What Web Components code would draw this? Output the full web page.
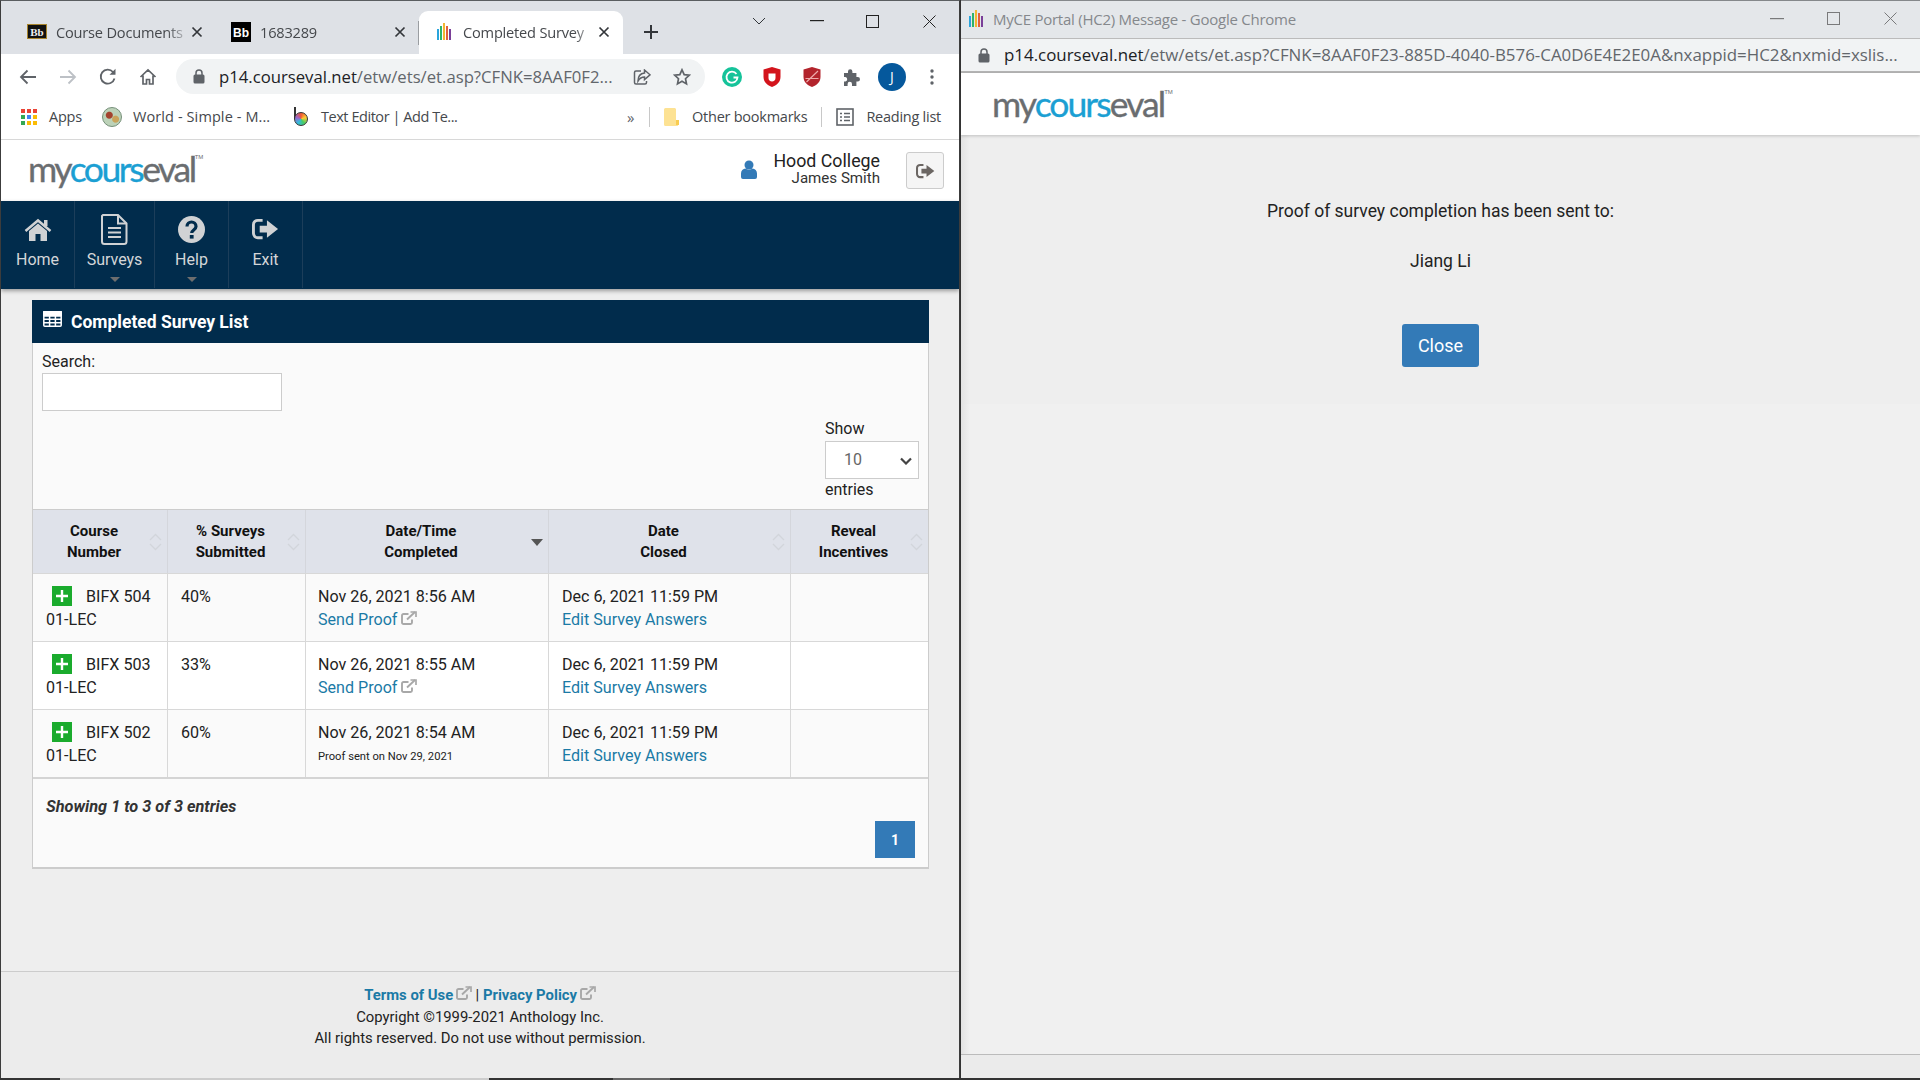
<!DOCTYPE html>
<html lang="en">
<head>
<meta charset="utf-8">
<title>Completed Survey List</title>
<style>
    html, body { margin: 0; padding: 0; background: #3a3a3a; }
    body { width: 1920px; height: 1080px; overflow: hidden; font-family: Roboto, "Liberation Sans", sans-serif; }
    #desk { display: grid; grid-template-columns: 960px 960px; grid-template-rows: 1078px 2px; }
    #taskbar { grid-column: 1 / 3; background: linear-gradient(90deg, #333 60px, #ccc 60px, #ccc 489px, #333 489px, #333 613px, #666 613px, #666 670px, #333 670px); }
</style>
</head>
<body>
<div id="desk">
    <browser-window>
        <course-header slot="page" user="1"></course-header>
        <main-nav slot="page"></main-nav>
        <survey-panel slot="page">
            <survey-row course="BIFX 504" pct="40%" done="Nov 26, 2021 8:56 AM" tint></survey-row>
            <survey-row course="BIFX 503" pct="33%" done="Nov 26, 2021 8:55 AM"></survey-row>
            <survey-row course="BIFX 502" pct="60%" done="Nov 26, 2021 8:54 AM" sent="Proof sent on Nov 29, 2021" tint></survey-row>
        </survey-panel>
        <page-footer slot="page"></page-footer>
    </browser-window>
    <popup-window></popup-window>
    <div id="taskbar"></div>
</div>

<script>
// Shared inline icons
const ICONS = {
    bars: `<svg width="15" height="17" viewBox="0 0 15 17"><rect x="0" y="6" width="2" height="11" fill="#2aa4dc"/><rect x="3" y="3" width="2" height="14" fill="#2fb36a"/><rect x="6" y="0" width="2" height="17" fill="#f2b632"/><rect x="9" y="3" width="2" height="14" fill="#e2603a"/><rect x="12" y="6" width="2" height="11" fill="#7a3f98"/></svg>`,
    external: `<svg class="ext" width="16" height="14" viewBox="0 0 16 14" fill="none" stroke="#a8a8a8" stroke-width="1.900"><path d="M11 8.500v3a1.500 1.500 0 0 1-1.500 1.500H2.500A1.500 1.500 0 0 1 1 11.500V4.500A1.500 1.500 0 0 1 2.500 3H7.500"/><path d="M6 8.500 14 1"/><path d="M9.500 1H15v5" stroke-width="1.700"/></svg>`,
    signout: `<path d="M11 2H6a4.500 4.500 0 0 0-4.500 4.500v9A4.500 4.500 0 0 0 6 20h5" fill="none" stroke="currentColor" stroke-width="3"/><path d="M8 7.500h7.500V2L27 11 15.500 20v-5.500H8z" fill="currentColor"/>`,
    lock: `<svg width="12" height="15" viewBox="0 0 12 15"><path d="M3 6V4a3 3 0 0 1 6 0v2" fill="none" stroke="#5f6368" stroke-width="1.500"/><rect x="0.500" y="5.500" width="11" height="9" rx="1.500" fill="#5f6368"/></svg>`
};

// Wordmark used in both windows
class CourseLogo extends HTMLElement {
    constructor() {
        super();
        this.attachShadow({ mode: 'open' });
        this.shadowRoot.innerHTML = `
            <style>
                :host { display: inline-flex; font: 400 35.5px/40px Lato, "Open Sans", sans-serif; letter-spacing: var(--logo-spacing, -1.95px); color: #6a6d70; -webkit-text-stroke: .35px currentColor; }
                b { font-weight: 400; color: #1b9fd3; }
                sup { font: 400 6px/6px "Liberation Sans", sans-serif; letter-spacing: 0; margin-top: 5px; -webkit-text-stroke: 0; }
            </style>
            <span>my<b>cours</b>eval</span><sup>TM</sup>`;
    }
}
customElements.define('course-logo', CourseLogo);

// Single browser tab
class ChromeTab extends HTMLElement {
    constructor() {
        super();
        this.attachShadow({ mode: 'open' });
        this.shadowRoot.innerHTML = `
            <style>
                :host { display: flex; align-items: center; height: 43px; box-sizing: border-box; width: 204px; padding: 0 13px 2px 15px; position: relative; }
                :host([active]) { background: #fff; border-radius: 9px 9px 0 0; }
                :host([divider])::after { content: ''; position: absolute; right: 0; top: 10px; height: 24px; width: 1px; background: #9a9da1; }
                .icon { width: 20px; height: 20px; display: flex; align-items: center; justify-content: center; flex: none; }
                .title { flex: 1; margin-left: 9px; font: 400 14.600px/20px "Open Sans", sans-serif; letter-spacing: -.2px; color: #45484c; white-space: nowrap; overflow: hidden;
                         -webkit-mask-image: linear-gradient(90deg, #000 82%, transparent); mask-image: linear-gradient(90deg, #000 82%, transparent); }
                svg.x { flex: none; }
            </style>
            <span class="icon"><slot name="icon"></slot></span>
            <span class="title"><slot></slot></span>
            <svg class="x" width="12" height="12" viewBox="0 0 12 12"><path d="M1.500 1.500l9 9m0-9-9 9" stroke="#33363a" stroke-width="1.700" fill="none"/></svg>`;
    }
}
customElements.define('chrome-tab', ChromeTab);

// Left browser window: tabs, toolbar, bookmarks, then the page slot
class BrowserWindow extends HTMLElement {
    constructor() {
        super();
        this.attachShadow({ mode: 'open' });
        this.shadowRoot.innerHTML = `
            <style>
                :host { display: flex; flex-direction: column; height: 1078px; box-sizing: border-box; border-top: 1px solid #5a5d60; border-left: 1px solid #3c3c3c; border-right: 1px solid #3c3c3c; background: #eee; overflow: hidden; }
                .tabs { height: 53px; background: #dee1e6; display: flex; align-items: flex-end; padding-left: 11px; flex: none; box-sizing: border-box; }
                .new { margin: 0 0 10px 16px; width: 24px; height: 24px; }
                .winbtns { margin-left: auto; display: flex; align-self: flex-start; align-items: center; height: 40px; }
                .winbtns svg { display: block; }
                .toolbar { height: 45px; background: #fff; display: flex; align-items: center; padding-left: 7px; flex: none; box-sizing: border-box; }
                .btn { width: 40px; height: 40px; display: flex; align-items: center; justify-content: center; flex: none; }
                .omni { margin-left: 8px; width: 529px; height: 35px; border-radius: 18px; background: #f1f3f4; display: flex; align-items: center; padding-left: 17px; box-sizing: border-box; margin-right: 7px; flex: none; }
                .url { margin-left: 14px; font: 400 16.700px/22px "Open Sans", sans-serif; color: #62666b; white-space: nowrap; width: 400px; overflow: hidden; }
                .url b { font-weight: 400; color: #202124; }
                .omni .btn { width: 40px; }
                .omni .share { margin-left: 3px; }
                .avatar { width: 28px; height: 28px; border-radius: 50%; background: #05589c; color: #fff; font: 400 14px/28px "Open Sans", sans-serif; text-align: center; }
                .marks { height: 36px; padding: 0 18px 4px 20px; background: #fff; border-bottom: 1px solid #d8d8d8; display: flex; align-items: center; flex: none; font: 400 14.500px/20px "Open Sans", sans-serif; letter-spacing: -.25px; color: #45484c; white-space: nowrap; }
                .mark { display: flex; align-items: center; flex: none; }
                .sep { width: 1px; height: 20px; background: #c8c8c8; flex: none; }
                .page { flex: 1; display: flex; flex-direction: column; min-height: 0; }
                .bo { position: relative; width: 16px; height: 20px; display: block; }
                .bo i { position: absolute; left: 1px; bottom: 1px; width: 14px; height: 14px; border-radius: 50%; box-sizing: border-box; border: 1.500px solid #333; background: conic-gradient(#e53, #fc3, #4c6, #3bd, #96c, #e53); }
                .bo u { position: absolute; left: 1px; top: 0; width: 1.500px; height: 12px; background: #333; }
                .globe { width: 20px; height: 20px; border-radius: 50%; background: radial-gradient(circle at 35% 40%, #a3432e 0 3px, transparent 4px), radial-gradient(circle at 70% 62%, #c9a35a 0 3px, transparent 4px), #bcd2b8; border: 1px solid #76907a; box-sizing: border-box; display: block; }
            </style>
            <div class="tabs">
                <chrome-tab>
                    <svg slot="icon" width="20" height="15" viewBox="0 0 20 15"><rect x=".5" y=".5" width="19" height="14" fill="#111" stroke="#a8842c"/><text x="10" y="11.500" text-anchor="middle" font-family="Liberation Serif" font-weight="700" font-size="11" fill="#eee">Bb</text></svg>
                    Course Documents
                </chrome-tab>
                <chrome-tab divider style="width:203px">
                    <svg slot="icon" width="20" height="20" viewBox="0 0 20 20"><rect width="20" height="20" fill="#000"/><text x="10" y="14.500" text-anchor="middle" font-family="Liberation Sans" font-weight="700" font-size="12" fill="#fff">Bb</text></svg>
                    1683289
                </chrome-tab>
                <chrome-tab active>
                    <span slot="icon" style="display:block;height:17px">${ICONS.bars}</span>
                    Completed Survey
                </chrome-tab>
                <svg class="new" viewBox="0 0 24 24"><path d="M12 5v14M5 12h14" stroke="#33363a" stroke-width="2"/></svg>
                <div class="winbtns">
                    <svg width="14" height="8" viewBox="0 0 14 8" style="margin-right:44px"><path d="M1 1l6 6 6-6" fill="none" stroke="#33363a"/></svg>
                    <svg width="14" height="2" viewBox="0 0 14 2" style="margin-right:42px"><rect width="14" height="1.200" fill="#222"/></svg>
                    <svg width="13" height="13" viewBox="0 0 13 13" style="margin-right:44px"><rect x=".5" y=".5" width="12" height="12" fill="none" stroke="#222"/></svg>
                    <svg width="13" height="13" viewBox="0 0 13 13" style="margin-right:23px"><path d="M.5.5l12 12m0-12-12 12" stroke="#222" fill="none"/></svg>
                </div>
            </div>
            <div class="toolbar">
                <span class="btn"><svg width="18" height="16" viewBox="0 0 18 16" fill="none" stroke="#5f6368" stroke-width="1.800"><path d="M17 8H2M8.500 1.500 2 8l6.500 6.500"/></svg></span>
                <span class="btn"><svg width="18" height="16" viewBox="0 0 18 16" fill="none" stroke="#bdc1c6" stroke-width="1.800"><path d="M1 8h15M9.500 1.500 16 8l-6.500 6.500"/></svg></span>
                <span class="btn"><svg width="18" height="18" viewBox="0 0 18 18" fill="none" stroke="#5f6368" stroke-width="1.800"><path d="M15.500 10.500A7 7 0 1 1 14 4"/><path d="M16.500 .8v6h-6z" fill="#5f6368" stroke="none"/></svg></span>
                <span class="btn"><svg width="18" height="18" viewBox="0 0 18 18" fill="none" stroke="#5f6368" stroke-width="1.700"><path d="M1.500 9 9 2l7.500 7M4 7.500V16h3.500v-4.500h3V16H14V7.500"/></svg></span>
                <div class="omni">
                    ${ICONS.lock}
                    <span class="url"><b>p14.courseval.net</b>/etw/ets/et.asp?CFNK=8AAF0F2...</span>
                    <span class="btn share"><svg width="18" height="16" viewBox="0 0 18 16" fill="none" stroke="#5f6368" stroke-width="1.500"><path d="M8 2H3a1.500 1.500 0 0 0-1.500 1.500v10A1.500 1.500 0 0 0 3 15h9a1.500 1.500 0 0 0 1.500-1.500V12"/><path d="M11.500 1 17 5.800l-5.500 4.700V8C8 8 6.500 9.500 5 12c0-4 2-7.500 6.500-8z"/></svg></span>
                    <span class="btn"><svg width="18" height="18" viewBox="0 0 18 18" fill="none" stroke="#5f6368" stroke-width="1.700"><path d="M9 1.800l2.200 4.800 5.100.6-3.800 3.500 1 5.200L9 13.300l-4.500 2.600 1-5.200-3.800-3.500 5.100-.6z"/></svg></span>
                </div>
                <span class="btn"><svg width="20" height="20" viewBox="0 0 20 20"><circle cx="10" cy="10" r="10" fill="#15c39a"/><path d="M14.500 7A5.500 5.500 0 1 0 15.500 10.500H11.500" fill="none" stroke="#fff" stroke-width="1.800"/></svg></span>
                <span class="btn"><svg width="18" height="20" viewBox="0 0 18 20"><path d="M9 0l8.500 2.500V10c0 5-4 8.500-8.500 10C4.500 18.500.5 15 .5 10V2.500z" fill="#d3141c"/><path d="M5.500 6.500h7V11c0 2-1.500 3.500-3.500 3.500S5.500 13 5.500 11z" fill="#fff"/></svg></span>
                <span class="btn"><svg width="18" height="20" viewBox="0 0 18 20"><path d="M9 0l8.500 2.500V10c0 5-4 8.500-8.500 10C4.500 18.500.5 15 .5 10V2.500z" fill="#b3242c"/><path d="M2.500 11.500h13M3.500 15 15 4" stroke="#eaa" stroke-width="1.200"/></svg></span>
                <span class="btn"><svg width="18" height="18" viewBox="0 0 18 18"><path d="M1 5h4V3.500a2.200 2.200 0 0 1 4.400 0V5h4v4h1.400a2.200 2.200 0 0 1 0 4.400H13.400V18H9v-2a2.200 2.200 0 0 0-4.400 0v2H1v-4.500h1.400a2.300 2.300 0 0 0 0-4.500H1z" fill="#5f6368"/></svg></span>
                <span class="btn"><span class="avatar">J</span></span>
                <span class="btn"><svg width="4" height="16" viewBox="0 0 4 16" fill="#5f6368"><circle cx="2" cy="2" r="1.700"/><circle cx="2" cy="8" r="1.700"/><circle cx="2" cy="14" r="1.700"/></svg></span>
            </div>
            <div class="marks">
                <span class="mark" style="width:81px;gap:11px">
                    <svg width="17" height="17" viewBox="0 0 17 17"><g><rect width="4" height="4" fill="#ea4335"/><rect x="6" width="4" height="4" fill="#ea4335"/><rect x="12" width="4" height="4" fill="#ea4335"/><rect y="6" width="4" height="4" fill="#34a853"/><rect x="6" y="6" width="4" height="4" fill="#4285f4"/><rect x="12" y="6" width="4" height="4" fill="#fbbc05"/><rect y="12" width="4" height="4" fill="#34a853"/><rect x="6" y="12" width="4" height="4" fill="#fbbc05"/><rect x="12" y="12" width="4" height="4" fill="#fbbc05"/></g></svg>
                    Apps
                </span>
                <span class="mark" style="width:191px;gap:11px;letter-spacing:.1px"><i class="globe"></i>World - Simple - M...</span>
                <span class="mark" style="gap:12px;letter-spacing:-.45px"><span class="bo"><u></u><i></i></span>Text Editor | Add Te...</span>
                <span style="margin-left:auto;width:22px;color:#5f6368;font-size:15px">»</span>
                <span class="sep"></span>
                <span class="mark" style="margin-left:14px;gap:12px"><svg width="16" height="18" viewBox="0 0 16 18"><path d="M1.500 0H11l1 1v13l3-1v3l-1.500 2h-12A1.500 1.500 0 0 1 0 16.500v-15A1.500 1.500 0 0 1 1.500 0z" fill="#fde293"/><rect x="12" y="12" width="3" height="5" fill="#f9cc50"/></svg>Other bookmarks</span>
                <span class="sep" style="margin-left:14px"></span>
                <span class="mark" style="margin-left:14px;gap:12px"><svg width="18" height="18" viewBox="0 0 18 18" fill="none" stroke="#5f6368"><rect x="1" y="1" width="16" height="16" stroke-width="1.600"/><path d="M4 5.500h2M4 9h2M4 12.500h2M8 5.500h6M8 9h6M8 12.500h6" stroke-width="1.400"/></svg>Reading list</span>
            </div>
            <div class="page"><slot name="page"></slot></div>`;
    }
}
customElements.define('browser-window', BrowserWindow);

// White site header with logo and user block
class CourseHeader extends HTMLElement {
    constructor() {
        super();
        this.attachShadow({ mode: 'open' });
        this.shadowRoot.innerHTML = `
            <style>
                :host { display: flex; align-items: center; height: 61px; background: #fff; padding-left: 27px; flex: none; color: #222; }
                course-logo { --logo-spacing: -2.450px; margin-top: -4px; }
                .user { margin-left: auto; display: flex; align-items: center; padding-right: 15px; }
                .who { text-align: right; margin: -4px 26px 0 16px; }
                .who div { font-size: 17.800px; line-height: 18px; }
                .who small { display: block; font-size: 15.100px; line-height: 16px; color: #333; }
                .ico { margin: -3px 0 0 0; }
                .out { width: 38px; height: 37px; box-sizing: border-box; border: 1px solid #ccc; border-radius: 3px; background: #f5f5f5; color: #6b6663; display: flex; align-items: center; justify-content: center; }
            </style>
            <course-logo></course-logo>
            <div class="user">
                <svg class="ico" width="16" height="19" viewBox="0 0 16 19"><circle cx="8" cy="5" r="4.500" fill="#337ab7"/><path d="M0 17v-3.500C0 10.500 2 9 4.500 8.500 6 10 10 10 11.500 8.500 14 9 16 10.500 16 13.500V17a2 2 0 0 1-2 2H2a2 2 0 0 1-2-2z" fill="#337ab7"/></svg>
                <div class="who"><div>Hood College</div><small>James Smith</small></div>
                <span class="out"><svg width="19" height="16" viewBox="0 0 28 22">${ICONS.signout}</svg></span>
            </div>`;
    }
}
customElements.define('course-header', CourseHeader);

// Dark navigation bar
class MainNav extends HTMLElement {
    constructor() {
        super();
        this.attachShadow({ mode: 'open' });
        this.shadowRoot.innerHTML = `
            <style>
                :host { display: flex; height: 88px; background: #012c4c; flex: none; box-shadow: 0 2px 4px rgba(0,0,0,.35); position: relative; color: #d4d6d8; font-size: 16px; }
                a { display: flex; flex-direction: column; align-items: center; box-sizing: border-box; border-right: 1px solid #1c3e5a; height: 87px; padding-top: 12px; }
                .ic { height: 32px; display: flex; align-items: center; justify-content: center; color: #d0d2d4; }
                span { line-height: 20px; margin-top: 5px; }
                i { width: 0; height: 0; border: 5px solid transparent; border-top: 5px solid #6e6e6e; border-bottom: 0; margin-top: 7px; }
            </style>
            <a style="width:74px">
                <div class="ic"><svg width="28" height="23" viewBox="0 0 28 23"><path d="M5 13 14 5.500 23 13v10h-6.500v-7h-5v7H5z" fill="currentColor"/><path d="M1.500 13 14 2.500 26.500 13" fill="none" stroke="currentColor" stroke-width="2.500"/><rect x="20" y="2" width="3.500" height="6" fill="currentColor"/></svg></div>
                <span>Home</span>
            </a>
            <a style="width:80px">
                <div class="ic"><svg width="27" height="31" viewBox="0 0 27 31" fill="none" stroke="currentColor" stroke-width="2"><path d="M2 1h15l8.500 8.500V27.500a2.500 2.500 0 0 1-2.500 2.500H3.500A2.500 2.500 0 0 1 1 27.500V2z"/><path d="M17 1v8.500h8.500"/><path d="M7 14h13M7 18.500h13M7 23h13" stroke-width="2"/></svg></div>
                <span>Surveys</span><i></i>
            </a>
            <a style="width:74px">
                <div class="ic"><svg width="27" height="27" viewBox="0 0 27 27"><circle cx="13.500" cy="13.500" r="13.500" fill="currentColor"/><path d="M9 10.500c0-6 9-6 9 0 0 3.500-4.300 3.500-4.300 6.500" fill="none" stroke="#012c4c" stroke-width="3.200"/><rect x="11.800" y="19" width="3.800" height="3.600" fill="#012c4c"/></svg></div>
                <span>Help</span><i></i>
            </a>
            <a style="width:74px">
                <div class="ic"><svg width="27" height="22" viewBox="0 0 28 22">${ICONS.signout}</svg></div>
                <span>Exit</span>
            </a>`;
    }
}
customElements.define('main-nav', MainNav);

// Column header cell
class SortHead extends HTMLElement {
    constructor() {
        super();
        this.attachShadow({ mode: 'open' });
        const active = this.hasAttribute('active');
        this.shadowRoot.innerHTML = `
            <style>
                :host { display: flex; align-items: center; justify-content: center; text-align: center; position: relative; padding: 0 18px 0 6px; border-right: 1px solid #d4d6dc; font-weight: 700; font-size: 15px; line-height: 21px; color: #111; height: 63px; }
                :host(:last-child) { border-right: 0; }
                svg { position: absolute; top: 23px; right: 5px; }
                .caret { top: 29px; right: 5px; }
            </style>
            <div><slot></slot></div>
            ${active
                ? `<svg class="caret" width="12" height="7" viewBox="0 0 12 7"><path d="M0 0h12L6 7z" fill="#555"/></svg>`
                : `<svg width="13" height="18" viewBox="0 0 13 18" fill="none" stroke="#d2d5db" stroke-width="1.300"><path d="M1 7l5.500-5.500L12 7M1 11l5.500 5.500L12 11"/></svg>`}`;
    }
}
customElements.define('sort-head', SortHead);

// One row of the survey list
class SurveyRow extends HTMLElement {
    constructor() {
        super();
        this.attachShadow({ mode: 'open' });
        const a = n => this.getAttribute(n) || '';
        const proofLine = a('sent')
            ? `<small>${a('sent')}</small>`
            : `<a>Send Proof</a> ${ICONS.external}`;
        this.shadowRoot.innerHTML = `
            <style>
                :host { display: grid; grid-template-columns: 135px 138px 243px 242px 1fr; background: #fff; border-bottom: 1px solid #d8d8d8; font-size: 16.100px; line-height: 23px; color: #222; height: 68px; box-sizing: border-box; }
                :host([tint]) { background: #fafafa; }
                :host(:last-child) { border-bottom: 2px solid #d4d4d4; height: 69px; }
                div { padding: 11px 0 0 12px; border-right: 1px solid #d8d8d8; min-width: 0; }
                div:last-child { border-right: 0; }
                .pad { padding-left: 13px; }
                .plus { display: inline-flex; vertical-align: -3px; width: 20px; height: 20px; background: #1aab2d; align-items: center; justify-content: center; margin: -3px 14px 0 6px; transform: translateY(-2px); }
                a { color: #1b7aa6; }
                small { font-size: 11.200px; display: block; line-height: 23px; color: #222; margin-top: 1px; }
                .ex svg { vertical-align: 0; }
            </style>
            <div class="pad"><span class="plus"><svg width="14" height="14" viewBox="0 0 14 14"><path d="M7 1v12M1 7h12" stroke="#fff" stroke-width="2.400"/></svg></span>${a('course')}<br>01-LEC</div>
            <div class="pad">${a('pct')}</div>
            <div class="ex">${a('done')}<br>${proofLine}</div>
            <div class="pad">Dec 6, 2021 11:59 PM<br><a>Edit Survey Answers</a></div>
            <div></div>`;
    }
}
customElements.define('survey-row', SurveyRow);

// Completed survey list panel
class SurveyPanel extends HTMLElement {
    constructor() {
        super();
        this.attachShadow({ mode: 'open' });
        this.shadowRoot.innerHTML = `
            <style>
                :host { display: flex; flex-direction: column; margin: 11px 30px 0 31px; height: 569px; box-sizing: border-box; border-left: 1px solid #ccc; border-right: 1px solid #ccc; border-bottom: 2px solid #ccc; background: #fafafa; flex: none; color: #222; font-size: 16px; }
                .title { height: 43px; flex: none; background: #012c4c; color: #fff; display: flex; align-items: center; padding-left: 11px; font-weight: 700; font-size: 17.500px; margin: 0 -1px; }
                .title svg { margin-right: 9px; margin-top: -5px; }
                .search { padding: 9px 0 0 9px; height: 69px; box-sizing: border-box; flex: none; line-height: 20px; }
                .search input { display: block; width: 240px; height: 38px; box-sizing: border-box; border: 1px solid #ccc; background: #fff; margin: 1px 0 0; padding: 0; }
                .len { align-self: flex-end; width: 103px; height: 97px; flex: none; line-height: 20px; padding-top: 7px; box-sizing: border-box; }
                .sel { width: 94px; height: 38px; box-sizing: border-box; border: 1px solid #ccc; background: #fff; display: flex; align-items: center; padding-left: 18px; color: #666; position: relative; margin: 2px 0 1px; }
                .sel svg { position: absolute; right: 6px; top: 15px; }
                .head { display: grid; grid-template-columns: 135px 138px 243px 242px 1fr; background: #dfe2ea; border-top: 1px solid #ccc; border-bottom: 1px solid #d8d8d8; height: 63px; flex: none; box-sizing: content-box; }
                .rows { display: flex; flex-direction: column; flex: none; }
                .info { font-style: italic; font-weight: 700; font-size: 16.300px; padding: 18px 0 0 13px; line-height: 20px; color: #333; flex: none; }
                .pager { align-self: flex-end; margin: 4px 13px 0 0; width: 40px; height: 37px; background: #337ab7; color: #fff; font-weight: 700; font-size: 14px; display: flex; align-items: center; justify-content: center; flex: none; }
            </style>
            <div class="title">
                <svg width="19" height="16" viewBox="0 0 19 16" fill="none" stroke="#fff" stroke-width="1.500"><rect x=".8" y=".8" width="17.400" height="14.400" rx="1"/><path d="M.8 5h17.400M.8 8.300h17.400M.8 11.700h17.400M6.600 5v10M12.400 5v10"/><rect x=".8" y=".8" width="17.400" height="3.400" fill="#fff"/></svg>
                Completed Survey List
            </div>
            <div class="search">Search:<input type="text"></div>
            <div class="len">
                Show
                <div class="sel">10<svg width="12" height="8" viewBox="0 0 12 8" fill="none" stroke="#444" stroke-width="2.200"><path d="M1 1.500l5 5 5-5"/></svg></div>
                entries
            </div>
            <div class="head">
                <sort-head>Course<br>Number</sort-head>
                <sort-head>% Surveys<br>Submitted</sort-head>
                <sort-head active>Date/Time<br>Completed</sort-head>
                <sort-head>Date<br>Closed</sort-head>
                <sort-head>Reveal<br>Incentives</sort-head>
            </div>
            <div class="rows"><slot></slot></div>
            <div class="info">Showing 1 to 3 of 3 entries</div>
            <div class="pager">1</div>`;
    }
}
customElements.define('survey-panel', SurveyPanel);

// Footer under the panel
class PageFooter extends HTMLElement {
    constructor() {
        super();
        this.attachShadow({ mode: 'open' });
        this.shadowRoot.innerHTML = `
            <style>
                :host { display: block; margin-top: auto; height: 107px; box-sizing: border-box; border-top: 1px solid #ccc; background: #ececec; text-align: center; font-size: 14.850px; line-height: 21.500px; color: #222; padding-top: 13px; flex: none; }
                a { color: #1b7aa6; font-weight: 700; }
                svg { vertical-align: 0; margin-left: -1px; }
            </style>
            <a>Terms of Use</a> ${ICONS.external} | <a>Privacy Policy</a> ${ICONS.external}<br>
            Copyright ©1999-2021 Anthology Inc.<br>
            All rights reserved. Do not use without permission.`;
    }
}
customElements.define('page-footer', PageFooter);

// Right popup window with the proof message
class PopupWindow extends HTMLElement {
    constructor() {
        super();
        this.attachShadow({ mode: 'open' });
        this.shadowRoot.innerHTML = `
            <style>
                :host { display: flex; flex-direction: column; height: 1078px; box-sizing: border-box; background: #eee; overflow: hidden; border-left: 1px solid #333; }
                .bar { height: 38px; flex: none; box-sizing: border-box; border-top: 1px solid #85888b; background: #e4e7ea; display: flex; align-items: center; padding: 0 0 2px 8px; font: 400 15px/20px "Open Sans", sans-serif; letter-spacing: -.25px; color: #85888c; }
                .bar span { margin-left: 9px; }
                .ctrl { margin-left: auto; display: flex; align-items: center; opacity: .55; }
                .addr { height: 35px; flex: none; box-sizing: border-box; border-top: 1px solid #bbb; border-bottom: 2px solid #b5b5b5; background: #f1f3f4; display: flex; align-items: center; padding-left: 17px; font: 400 16.900px/22px "Open Sans", sans-serif; color: #62666b; white-space: nowrap; }
                .addr span { margin-left: 14px; }
                .addr b { font-weight: 400; color: #202124; }
                .head { height: 62px; flex: none; background: #fff; padding-left: 31px; display: flex; align-items: center; box-shadow: 0 1px 3px rgba(0,0,0,.2); position: relative; }
                .body { flex: 1; background: linear-gradient(90deg, #e2e2e2, rgba(240,240,240,0) 9px), #f0f0f0; display: flex; flex-direction: column; }
                .msg { height: 269px; flex: none; display: flex; flex-direction: column; align-items: center; font-size: 17.500px; line-height: 22px; color: #222; padding-top: 65px; box-sizing: border-box; background: linear-gradient(90deg, #e2e2e2, rgba(238,238,238,0) 9px), #eee; }
                p { margin: 0 0 28px; }
                button { margin-top: 24px; flex: none; width: 77px; height: 43px; border: 0; border-radius: 3px; background: #337ab7; color: #fff; font: 400 18px Roboto, sans-serif; padding: 0; }
                .foot { margin-top: auto; height: 23px; border-top: 1px solid #bbb; background: #ebebeb; }
            </style>
            <div class="bar">
                ${ICONS.bars}<span>MyCE Portal (HC2) Message - Google Chrome</span>
                <div class="ctrl">
                    <svg width="14" height="2" viewBox="0 0 14 2" style="margin-right:43px"><rect width="14" height="1.200" fill="#222"/></svg>
                    <svg width="13" height="13" viewBox="0 0 13 13" style="margin-right:44px"><rect x=".5" y=".5" width="12" height="12" fill="none" stroke="#222"/></svg>
                    <svg width="13" height="13" viewBox="0 0 13 13" style="margin-right:23px"><path d="M.5.5l12 12m0-12-12 12" stroke="#222" fill="none"/></svg>
                </div>
            </div>
            <div class="addr">${ICONS.lock}<span><b>p14.courseval.net</b>/etw/ets/et.asp?CFNK=8AAF0F23-885D-4040-B576-CA0D6E4E2E0A&amp;nxappid=HC2&amp;nxmid=xslis...</span></div>
            <div class="head"><course-logo></course-logo></div>
            <div class="body">
                <div class="msg">
                    <p>Proof of survey completion has been sent to:</p>
                    <p>Jiang Li</p>
                    <button>Close</button>
                </div>
                <div class="foot"></div>
            </div>`;
    }
}
customElements.define('popup-window', PopupWindow);
</script>
</body>
</html>
